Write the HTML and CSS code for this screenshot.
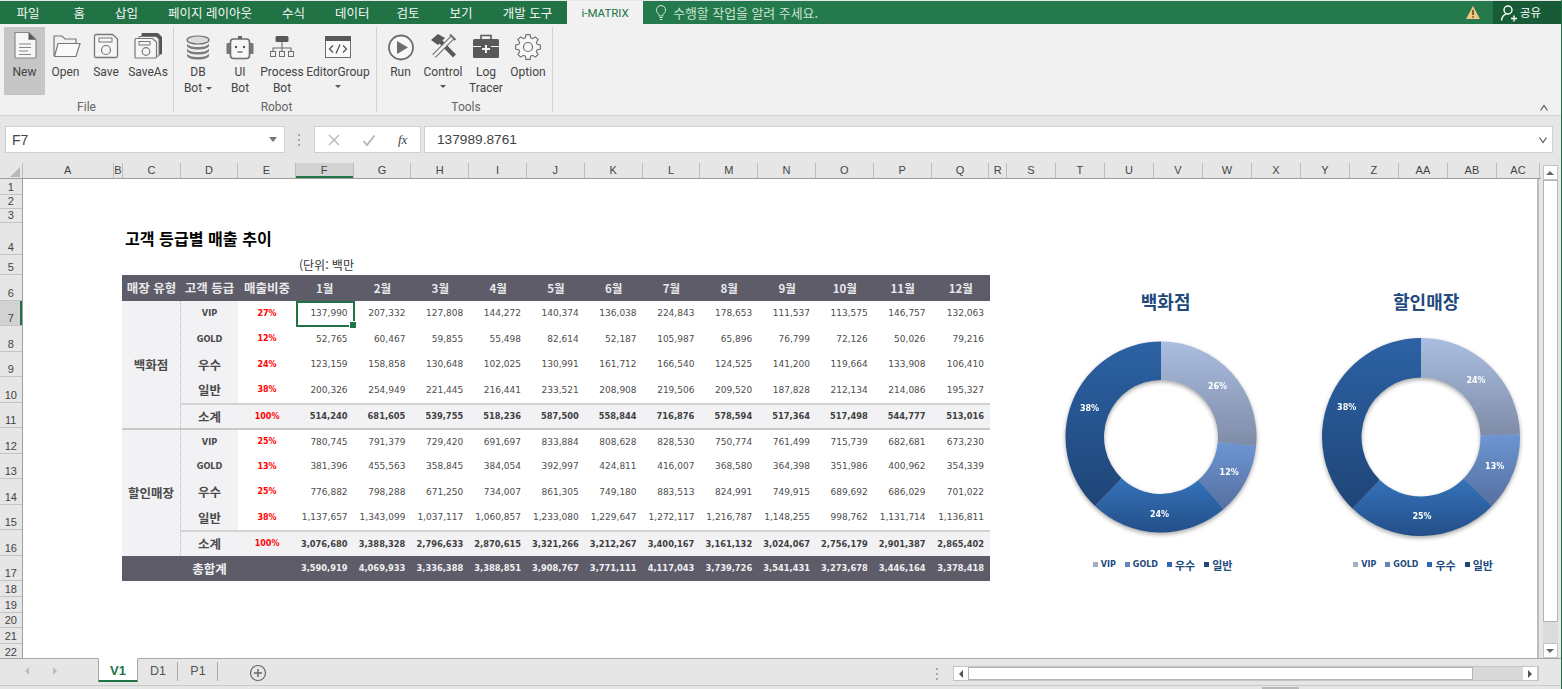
FILE: index.html
```html
<!DOCTYPE html>
<html lang="ko">
<head>
<meta charset="utf-8">
<title>고객 등급별 매출 추이</title>
<link rel="stylesheet" href="styles.css">
</head>
<body>
<div class="app">
  <nav class="tabs">
    <span class="tab first">파일</span><span class="tab">홈</span><span class="tab">삽입</span><span class="tab">페이지 레이아웃</span><span class="tab">수식</span><span class="tab tight">데이터</span><span class="tab">검토</span><span class="tab">보기</span><span class="tab last">개발 도구</span>
    <span class="tab-active">i-MATRIX</span>
    <div class="tell">
      <svg width="14" height="18" viewBox="0 0 14 18"><path d="M7 1.5a4.6 4.6 0 0 0-2.6 8.4c.6.5.8 1.1.8 2h3.6c0-.9.2-1.5.8-2A4.6 4.6 0 0 0 7 1.5ZM5.4 13.5h3.2M5.8 15.5h2.4" fill="none" stroke="#c9e2d3" stroke-width="1"/></svg>
      <span>수행할 작업을 알려 주세요.</span>
    </div>
    <svg class="warn" width="16" height="16" viewBox="0 0 16 16"><path d="M8 1.5 15 14.5H1Z" fill="#f2c67c"/><path d="M8 5.5v5M8 11.7v1.6" stroke="#5a4a2a" stroke-width="1.6"/></svg>
    <div class="share">
      <svg width="18" height="18" viewBox="0 0 18 18"><circle cx="8" cy="6" r="4" fill="none" stroke="#fff" stroke-width="1.4"/><path d="M1.5 16.5c.5-3.5 2.5-6 5-6.4M11 14.5h6M14 11.5v6" fill="none" stroke="#fff" stroke-width="1.4"/></svg>
      <span>공유</span>
    </div>
  </nav>

  <section class="ribbon">
    <div class="group g1">
      <div class="btns">
        <div class="btn w41 on">
          <svg width="32" height="32" viewBox="0 0 32 32"><path d="M6 2.5H20L27 9.5V27a1 1 0 0 1-1 1H7a1 1 0 0 1-1-1Z" fill="#f6f6f6" stroke="#8a8a8a" stroke-width="1.2"/><path d="M19.5 2.5 27 9.8H19.5Z" fill="#595959"/><path d="M10 14h12M10 17.5h12M10 21h9M10 24.5h12" stroke="#858585"/></svg>
          <span>New</span>
        </div>
        <div class="btn w41">
          <svg width="32" height="32" viewBox="0 0 32 32"><path d="M4 26V6h8l3 3h11v4.5" fill="none" stroke="#777" stroke-width="1.2"/><path d="M4.5 26.5 8 13.5H30L26 26.5Z" fill="#fafafa" stroke="#777" stroke-width="1.2"/></svg>
          <span>Open</span>
        </div>
        <div class="btn w40">
          <svg width="32" height="32" viewBox="0 0 32 32"><path d="M6 4.5H22.5L27.5 9V26A1.5 1.5 0 0 1 26 27.5H6A1.5 1.5 0 0 1 4.5 26V6A1.5 1.5 0 0 1 6 4.5Z" fill="#f6f6f6" stroke="#777" stroke-width="1.3"/><rect x="9" y="8" width="13" height="4" fill="none" stroke="#777"/><circle cx="16" cy="20" r="4.5" fill="none" stroke="#777" stroke-width="1.2"/></svg>
          <span>Save</span>
        </div>
        <div class="btn w44">
          <svg width="32" height="32" viewBox="0 0 32 32"><path d="M10 6V3.5H26L29.5 7V24H26" fill="#555" stroke="#555"/><path d="M7 9V6.500H24L27 9V26H24" fill="#f1f1f1" stroke="#777"/><path d="M4 8.500H20.500L24.500 12V27A1 1 0 0 1 23.500 28H4A1 1 0 0 1 3 27V9.500A1 1 0 0 1 4 8.500Z" fill="#f6f6f6" stroke="#777" stroke-width="1.2"/><rect x="7" y="11.500" width="11" height="3.500" fill="none" stroke="#777"/><circle cx="14" cy="21.500" r="3.800" fill="none" stroke="#777" stroke-width="1.2"/></svg>
          <span>SaveAs</span>
        </div>
      </div>
      <div class="glabel">File</div>
    </div>
    <div class="group g2">
      <div class="btns">
        <div class="btn w42">
          <svg width="32" height="32" viewBox="0 0 32 32"><ellipse cx="16" cy="10" rx="11" ry="4" fill="#dcdcdc" stroke="#6d6d6d" stroke-width="1.2"/><path d="M5 13c0 2.500 5 4 11 4s11-1.500 11-4v2.500c0 2.500-5 4-11 4s-11-1.500-11-4Z" fill="#7c7c7c"/><path d="M5 18c0 2.500 5 4 11 4s11-1.500 11-4v2.500c0 2.500-5 4-11 4s-11-1.500-11-4Z" fill="#7c7c7c"/><path d="M5 23c0 2.500 5 4 11 4s11-1.500 11-4v2.500c0 2.500-5 4-11 4s-11-1.500-11-4Z" fill="#7c7c7c"/></svg>
          <span>DB</span><span>Bot<i class="caret inline"></i></span>
        </div>
        <div class="btn w42">
          <svg width="32" height="32" viewBox="0 0 32 32"><rect x="14" y="6" width="4" height="3" fill="#666"/><rect x="2.500" y="13" width="4" height="11" rx="1" fill="#777"/><rect x="25.500" y="13" width="4" height="11" rx="1" fill="#777"/><rect x="6.500" y="9" width="19" height="19.500" rx="3" fill="#f6f6f6" stroke="#6d6d6d" stroke-width="1.600"/><circle cx="12" cy="17" r="1.200" fill="#555"/><circle cx="20" cy="17" r="1.200" fill="#555"/><path d="M13.500 22h5" stroke="#555" stroke-width="1.200"/></svg>
          <span>UI</span><span>Bot</span>
        </div>
        <div class="btn w42">
          <svg width="32" height="32" viewBox="0 0 32 32"><rect x="9.500" y="6" width="13" height="6" rx="1.500" fill="#595959"/><path d="M16 12v6M7 21.500V18H25V21.500M16 18v3.500" fill="none" stroke="#6d6d6d" stroke-width="1.100"/><rect x="4.500" y="21.500" width="5" height="5" fill="none" stroke="#6d6d6d"/><rect x="13.500" y="21.500" width="5" height="5" fill="none" stroke="#6d6d6d"/><rect x="22.500" y="21.500" width="5" height="5" fill="none" stroke="#6d6d6d"/></svg>
          <span>Process</span><span>Bot</span>
        </div>
        <div class="btn w70">
          <svg width="32" height="32" viewBox="0 0 32 32"><rect x="3.500" y="6.500" width="25" height="21" fill="#fafafa" stroke="#6d6d6d"/><rect x="3" y="6" width="26" height="5" fill="#595959"/><path d="M11 15.500 7.500 19 11 22.500M21 15.500 24.500 19 21 22.500M18 14.500 14 23.500" fill="none" stroke="#555" stroke-width="1.300"/></svg>
          <span>EditorGroup</span><i class="caret"></i>
        </div>
      </div>
      <div class="glabel">Robot</div>
    </div>
    <div class="group g3">
      <div class="btns">
        <div class="btn w41">
          <svg width="32" height="32" viewBox="0 0 32 32"><circle cx="16" cy="17.500" r="12" fill="#f8f8f8" stroke="#6d6d6d" stroke-width="1.800"/><path d="M12 11 23 17.500 12 24Z" fill="#6d6d6d"/></svg>
          <span>Run</span>
        </div>
        <div class="btn w44">
          <svg width="32" height="32" viewBox="0 0 32 32"><path d="M11 9 27.500 26" stroke="#595959" stroke-width="4.200"/><path d="M4 10 11 4 18 8 11 15Z" fill="#595959"/><path d="M26 7 7 26" stroke="#6d6d6d" stroke-width="5"/><path d="M26 7 7 26" stroke="#f1f1f1" stroke-width="2.800"/><path d="M23 4.500 28.500 10" stroke="#6d6d6d" stroke-width="2"/></svg>
          <span>Control</span><i class="caret"></i>
        </div>
        <div class="btn w42">
          <svg width="32" height="32" viewBox="0 0 32 32"><path d="M11 9.500V5.500H21V9.500" fill="none" stroke="#595959" stroke-width="1.600"/><rect x="3" y="9" width="26" height="19" rx="1.500" fill="#595959"/><path d="M3 16.500H11M21 16.500H29" stroke="#f1f1f1"/><path d="M16 15v8M12 19h8" stroke="#f1f1f1" stroke-width="2"/></svg>
          <span>Log</span><span>Tracer</span>
        </div>
        <div class="btn w42">
          <svg width="32" height="32" viewBox="0 0 32 32"><g transform="translate(16 17)"><polygon points="-2.620,-9.130 -1.960,-12.350 1.960,-12.350 2.620,-9.130 4.600,-8.310 7.350,-10.120 10.120,-7.350 8.310,-4.600 9.130,-2.620 12.350,-1.960 12.350,1.960 9.130,2.620 8.310,4.600 10.120,7.350 7.350,10.120 4.600,8.310 2.620,9.130 1.960,12.350 -1.960,12.350 -2.620,9.130 -4.600,8.310 -7.350,10.120 -10.120,7.350 -8.310,4.600 -9.130,2.620 -12.350,1.960 -12.350,-1.960 -9.130,-2.620 -8.310,-4.600 -10.120,-7.350 -7.350,-10.120 -4.600,-8.310" fill="#f8f8f8" stroke="#6d6d6d" stroke-width="1.100"/><circle r="4.500" fill="none" stroke="#6d6d6d" stroke-width="1.200"/></g></svg>
          <span>Option</span>
        </div>
      </div>
      <div class="glabel">Tools</div>
    </div>
    <svg class="collapse" width="10" height="8" viewBox="0 0 10 8"><path d="M1.500 6.500 5 1.500 8.500 6.500" fill="none" stroke="#555" stroke-width="1.200"/></svg>
  </section>

  <section class="fbar">
    <div class="namebox"><span>F7</span><i class="tri"></i></div>
    <div class="fdots"></div>
    <div class="fbtns">
      <svg width="14" height="14" viewBox="0 0 14 14"><path d="M2 2 12 12M12 2 2 12" stroke="#b5b5b5" stroke-width="1.400"/></svg>
      <svg width="14" height="14" viewBox="0 0 14 14"><path d="M1.500 8 5 12 12.500 2.500" fill="none" stroke="#b5b5b5" stroke-width="1.800"/></svg>
      <span class="fx">fx</span>
    </div>
    <div class="finput"><span>137989.8761</span><svg width="10" height="8" viewBox="0 0 10 8"><path d="M1.500 1.500 5 6.500 8.500 1.500" fill="none" stroke="#555" stroke-width="1.200"/></svg></div>
  </section>

  <section class="workspace">
    <div class="grid-area">
      <div class="colhead">
        <div class="corner"><i></i></div>
        <div>A</div><div>B</div><div>C</div><div>D</div><div>E</div><div class="sel">F</div><div>G</div><div>H</div><div>I</div><div>J</div><div>K</div><div>L</div><div>M</div><div>N</div><div>O</div><div>P</div><div>Q</div><div>R</div><div>S</div><div>T</div><div>U</div><div>V</div><div>W</div><div>X</div><div>Y</div><div>Z</div><div>AA</div><div>AB</div><div>AC</div>
      </div>
      <div class="sheet-body">
        <div class="rowhead">
          <div class="h16">1</div><div class="h14">2</div><div class="h14">3</div><div class="h32">4</div><div class="h20">5</div>
          <div class="h25">6</div><div class="h25 sel">7</div><div class="h25">8</div><div class="h25">9</div><div class="h25">10</div><div class="h25">11</div><div class="h25">12</div><div class="h25">13</div><div class="h25">14</div><div class="h25">15</div><div class="h25">16</div><div class="h25">17</div>
          <div class="h15">18</div><div class="h15">19</div><div class="h15">20</div><div class="h15">21</div><div class="h15">22</div>
        </div>
        <div class="sheet">
          <div class="report">
            <h1 class="title">고객 등급별 매출 추이</h1>
            <div class="unit">(단위: 백만</div>
            <div class="tbl">
              <div class="row head"><div>매장 유형</div><div>고객 등급</div><div>매출비중</div><div>1월</div><div>2월</div><div>3월</div><div>4월</div><div>5월</div><div>6월</div><div>7월</div><div>8월</div><div>9월</div><div>10월</div><div>11월</div><div>12월</div></div>
              <div class="row"><div class="store">백화점</div><div class="grade en">VIP</div><div class="pct">27%</div><div class="num active">137,990</div><div class="num">207,332</div><div class="num">127,808</div><div class="num">144,272</div><div class="num">140,374</div><div class="num">136,038</div><div class="num">224,843</div><div class="num">178,653</div><div class="num">111,537</div><div class="num">113,575</div><div class="num">146,757</div><div class="num">132,063</div></div>
              <div class="row"><div class="grade en">GOLD</div><div class="pct">12%</div><div class="num">52,765</div><div class="num">60,467</div><div class="num">59,855</div><div class="num">55,498</div><div class="num">82,614</div><div class="num">52,187</div><div class="num">105,987</div><div class="num">65,896</div><div class="num">76,799</div><div class="num">72,126</div><div class="num">50,026</div><div class="num">79,216</div></div>
              <div class="row"><div class="grade">우수</div><div class="pct">24%</div><div class="num">123,159</div><div class="num">158,858</div><div class="num">130,648</div><div class="num">102,025</div><div class="num">130,991</div><div class="num">161,712</div><div class="num">166,540</div><div class="num">124,525</div><div class="num">141,200</div><div class="num">119,664</div><div class="num">133,908</div><div class="num">106,410</div></div>
              <div class="row"><div class="grade">일반</div><div class="pct">38%</div><div class="num">200,326</div><div class="num">254,949</div><div class="num">221,445</div><div class="num">216,441</div><div class="num">233,521</div><div class="num">208,908</div><div class="num">219,506</div><div class="num">209,520</div><div class="num">187,828</div><div class="num">212,134</div><div class="num">214,086</div><div class="num">195,327</div></div>
              <div class="row sub"><div class="grade">소계</div><div class="pct">100%</div><div class="num">514,240</div><div class="num">681,605</div><div class="num">539,755</div><div class="num">518,236</div><div class="num">587,500</div><div class="num">558,844</div><div class="num">716,876</div><div class="num">578,594</div><div class="num">517,364</div><div class="num">517,498</div><div class="num">544,777</div><div class="num">513,016</div></div>
              <div class="row grp"><div class="store">할인매장</div><div class="grade en">VIP</div><div class="pct">25%</div><div class="num">780,745</div><div class="num">791,379</div><div class="num">729,420</div><div class="num">691,697</div><div class="num">833,884</div><div class="num">808,628</div><div class="num">828,530</div><div class="num">750,774</div><div class="num">761,499</div><div class="num">715,739</div><div class="num">682,681</div><div class="num">673,230</div></div>
              <div class="row"><div class="grade en">GOLD</div><div class="pct">13%</div><div class="num">381,396</div><div class="num">455,563</div><div class="num">358,845</div><div class="num">384,054</div><div class="num">392,997</div><div class="num">424,811</div><div class="num">416,007</div><div class="num">368,580</div><div class="num">364,398</div><div class="num">351,986</div><div class="num">400,962</div><div class="num">354,339</div></div>
              <div class="row"><div class="grade">우수</div><div class="pct">25%</div><div class="num">776,882</div><div class="num">798,288</div><div class="num">671,250</div><div class="num">734,007</div><div class="num">861,305</div><div class="num">749,180</div><div class="num">883,513</div><div class="num">824,991</div><div class="num">749,915</div><div class="num">689,692</div><div class="num">686,029</div><div class="num">701,022</div></div>
              <div class="row"><div class="grade">일반</div><div class="pct">38%</div><div class="num">1,137,657</div><div class="num">1,343,099</div><div class="num">1,037,117</div><div class="num">1,060,857</div><div class="num">1,233,080</div><div class="num">1,229,647</div><div class="num">1,272,117</div><div class="num">1,216,787</div><div class="num">1,148,255</div><div class="num">998,762</div><div class="num">1,131,714</div><div class="num">1,136,811</div></div>
              <div class="row sub"><div class="grade">소계</div><div class="pct">100%</div><div class="num">3,076,680</div><div class="num">3,388,328</div><div class="num">2,796,633</div><div class="num">2,870,615</div><div class="num">3,321,266</div><div class="num">3,212,267</div><div class="num">3,400,167</div><div class="num">3,161,132</div><div class="num">3,024,067</div><div class="num">2,756,179</div><div class="num">2,901,387</div><div class="num">2,865,402</div></div>
              <div class="row total"><div></div><div class="grade">총합계</div><div></div><div class="num">3,590,919</div><div class="num">4,069,933</div><div class="num">3,336,388</div><div class="num">3,388,851</div><div class="num">3,908,767</div><div class="num">3,771,111</div><div class="num">4,117,043</div><div class="num">3,739,726</div><div class="num">3,541,431</div><div class="num">3,273,678</div><div class="num">3,446,164</div><div class="num">3,378,418</div></div>
            </div>
          </div>
          <div class="charts">
            <svg class="defs" width="0" height="0">
              <defs>
                <linearGradient id="g1" x1="0" y1="0" x2="0" y2="1"><stop offset="0" stop-color="#abbde0"/><stop offset="1" stop-color="#7f8ca8"/></linearGradient>
                <linearGradient id="g2" x1="0" y1="0" x2="0" y2="1"><stop offset="0" stop-color="#6c95d3"/><stop offset="1" stop-color="#566f9f"/></linearGradient>
                <linearGradient id="g3" x1="0" y1="0" x2="0" y2="1"><stop offset="0" stop-color="#3573bb"/><stop offset="1" stop-color="#234f88"/></linearGradient>
                <linearGradient id="g4" x1="0" y1="0" x2="0" y2="1"><stop offset="0" stop-color="#2c62a4"/><stop offset="1" stop-color="#1f4577"/></linearGradient>
              </defs>
            </svg>
            <figure class="chart">
              <figcaption>백화점</figcaption>
              <svg class="donut d1" width="200" height="200" viewBox="0 0 200 200">
                <path fill="url(#g1)" d="M100 4.500A95.500 95.500 0 0 1 195.080 108.990L156.750 105.360A57 57 0 0 0 100 43Z"/>
                <path fill="url(#g2)" d="M195.080 108.990A95.500 95.500 0 0 1 162.660 172.070L137.400 143.020A57 57 0 0 0 156.750 105.360Z"/>
                <path fill="url(#g3)" d="M162.660 172.070A95.500 95.500 0 0 1 34.020 169.050L60.620 141.210A57 57 0 0 0 137.400 143.020Z"/>
                <path fill="url(#g4)" d="M34.020 169.050A95.500 95.500 0 0 1 100 4.500L100 43A57 57 0 0 0 60.620 141.210Z"/>
                <text x="156.500" y="49.500">26%</text><text x="168.200" y="135.800">12%</text><text x="98.500" y="177.800">24%</text><text x="28.500" y="71.800">38%</text>
              </svg>
              <div class="legend">
                <span><i class="s1"></i><b class="en">VIP</b></span><span><i class="s2"></i><b class="en">GOLD</b></span><span><i class="s3"></i><b>우수</b></span><span><i class="s4"></i><b>일반</b></span>
              </div>
            </figure>
            <figure class="chart">
              <figcaption>할인매장</figcaption>
              <svg class="donut d2" width="200" height="200" viewBox="0 0 200 200">
                <path fill="url(#g1)" d="M100 1A99 99 0 0 1 198.970 97.580L159.480 98.550A59.500 59.500 0 0 0 100 40.500Z"/>
                <path fill="url(#g2)" d="M198.970 97.580A99 99 0 0 1 170.970 169.020L142.660 141.480A59.500 59.500 0 0 0 159.480 98.550Z"/>
                <path fill="url(#g3)" d="M170.970 169.020A99 99 0 0 1 31.480 171.460L58.820 142.950A59.500 59.500 0 0 0 142.660 141.480Z"/>
                <path fill="url(#g4)" d="M31.480 171.460A99 99 0 0 1 100 1L100 40.500A59.500 59.500 0 0 0 58.820 142.950Z"/>
                <text x="155" y="43.300">24%</text><text x="173.700" y="129.600">13%</text><text x="101" y="179.300">25%</text><text x="25.700" y="70.600">38%</text>
              </svg>
              <div class="legend">
                <span><i class="s1"></i><b class="en">VIP</b></span><span><i class="s2"></i><b class="en">GOLD</b></span><span><i class="s3"></i><b>우수</b></span><span><i class="s4"></i><b>일반</b></span>
              </div>
            </figure>
          </div>
        </div>
      </div>
    </div>
    <div class="vscroll">
      <div class="sbtn"><i class="up"></i></div>
      <div class="vthumb"></div>
      <div class="vtrack"></div>
      <div class="sbtn"><i class="down"></i></div>
    </div>
  </section>

  <footer class="sheetbar">
    <div class="navs"><i class="nl"></i><i class="nr"></i></div>
    <div class="stab current">V1</div>
    <div class="stab">D1</div>
    <div class="stab">P1</div>
    <svg class="add" width="18" height="18" viewBox="0 0 18 18"><circle cx="9" cy="9" r="7.500" fill="none" stroke="#666" stroke-width="1.200"/><path d="M9 5v8M5 9h8" stroke="#666" stroke-width="1.400"/></svg>
    <div class="bardots"></div>
    <div class="hscroll">
      <div class="hbtn"><i class="nl dark"></i></div>
      <div class="hthumb"></div>
      <div class="htrack"></div>
      <div class="hbtn"><i class="nr dark"></i></div>
    </div>
  </footer>
  <div class="statusbar"><i></i></div>
</div>
</body>
</html>
```
FILE: styles.css
```css
* { box-sizing: border-box; }
html, body { margin: 0; padding: 0; }
body { width: 1562px; height: 689px; overflow: hidden; background: #e6e6e6; font-family: "Noto Sans CJK KR", "Open Sans", sans-serif; color: #444; }
.app { width: 1562px; height: 689px; display: flex; flex-direction: column; border-right: 1px solid #217346; padding-top: 1px; background: #e6e6e6; }

/* title tabs */
.tabs { height: 23px; flex: none; background: #217346; display: flex; align-items: center; font-size: 12.500px; color: #f2f7f4; line-height: 23px; white-space: nowrap; }
.tab { padding: 0 15px; }
.tab.first { padding: 0 19px 0 16.500px; }
.tab.tight { padding-right: 12px; }
.tab.last { padding-right: 15px; }
.tab-active { width: 76px; height: 24px; margin-top: 1px; background: #f1f1f1; color: #217346; text-align: center; font: 11.500px/24px "Roboto", sans-serif; }
.tell { flex: 1; height: 23px; display: flex; align-items: center; gap: 5px; padding-left: 11px; background: #247a4c; color: #c9e2d3; font-size: 12.900px; }
.warn { background: #247a4c; box-sizing: content-box; padding: 3.500px 12px 3.500px 0; }
.warn { margin-left: -28px; position: relative; }
.share { width: 68px; height: 23px; background: #185c37; display: flex; align-items: center; gap: 2px; padding-left: 7px; color: #fff; font-size: 11.500px; }

/* ribbon */
.ribbon { height: 92px; flex: none; background: #f1f1f1; border-bottom: 1px solid #d4d4d4; display: flex; padding: 3px 0 0 4px; position: relative; font: 12px/16px "Roboto", sans-serif; color: #444; }
.group { display: flex; flex-direction: column; width: 170px; height: 85px; border-right: 1px solid #d2d2d2; }
.g1 { padding-right: 4px; }
.g2 { width: 203px; padding-left: 3px; }
.g3 { width: 176px; padding-left: 3px; }
.btns { display: flex; height: 68px; }
.btn { height: 68px; flex: none; display: flex; flex-direction: column; align-items: center; padding-top: 3px; text-align: center; white-space: nowrap; }
.btn svg { flex: none; margin-bottom: 1.500px; }
.btn.on { background: #c6c6c6; }
.w40 { width: 40px; } .w41 { width: 41px; } .w42 { width: 42px; } .w44 { width: 44px; } .w70 { width: 70px; }
.glabel { height: 16px; margin-top: 4px; text-align: center; color: #666; }
.caret { display: block; width: 0; height: 0; margin-top: 5px; border: 3px solid transparent; border-top-color: #555; border-bottom-width: 0; }
.caret.inline { display: inline-block; margin: 0 0 2px 4px; }
.collapse { position: absolute; right: 12px; bottom: 3px; }

/* formula bar */
.fbar { height: 47px; flex: none; display: flex; align-items: flex-start; padding: 10px 0 0 5px; background: #e6e6e6; }
.namebox { width: 280px; height: 27px; background: #fff; border: 1px solid #cfcfcf; display: flex; align-items: center; justify-content: space-between; padding: 0 5px 0 6px; font: 14px "Liberation Sans", sans-serif; color: #444; }
.tri { width: 0; height: 0; border: 4px solid transparent; border-top: 5px solid #777; border-bottom-width: 0; margin-right: 2px; }
.fdots { width: 2px; height: 12px; margin: 8px 14px 0 13px; background: repeating-linear-gradient(#aaa 0 2px, transparent 2px 5px); }
.fbtns { width: 107px; height: 27px; background: #fff; border: 1px solid #cfcfcf; display: flex; align-items: center; padding-left: 12px; gap: 21px; }
.fx { font: italic 13px "Liberation Serif", serif; color: #444; margin-left: 1px; }
.finput { width: 1129px; height: 27px; margin-left: 3px; background: #fff; border: 1px solid #cfcfcf; display: flex; align-items: center; justify-content: space-between; padding: 0 4px 0 12px; font: 13.700px "Liberation Sans", sans-serif; color: #444; }

/* grid */
.workspace { height: 495px; flex: none; display: flex; }
.grid-area { width: 1541px; flex: none; }
.colhead { height: 16px; display: grid; grid-template-columns: 22.500px 91.100px 9.700px repeat(3, 57.500px) repeat(12, 57.800px) 17.600px repeat(10, 49px) 43px; font: 11px/15px "Liberation Sans", sans-serif; color: #444; border-bottom: 1px solid #9e9e9e; }
.colhead > div { text-align: center; border-right: 1px solid #bdbdbd; overflow: hidden; }
.colhead .sel { background: #d2d2d2; box-shadow: inset 0 -2px 0 #217346; }
.corner { position: relative; }
.corner i { display: block; width: 0; height: 0; margin: 4px 0 0 10px; border-style: solid; border-width: 0 0 10px 10px; border-color: transparent transparent #b9b9b9 transparent; }
.sheet-body { height: 479px; display: flex; overflow: hidden; }
.rowhead { width: 22.500px; flex: none; font: 11px/13px "Liberation Sans", sans-serif; color: #444; border-right: 1px solid #9e9e9e; }
.rowhead > div { display: flex; align-items: flex-end; justify-content: center; border-bottom: 1px solid #c4c4c4; }
.rowhead .sel { background: #d2d2d2; box-shadow: inset -2px 0 0 #217346; }
.h16 { height: 16px; } .h14 { height: 14px; } .h32 { height: 32px; } .h20 { height: 20px; } .h25 { height: 25.500px; } .h15 { height: 15.800px; }
.sheet { width: 1516px; flex: none; background: #fff; display: flex; padding-left: 99.500px; border-right: 2px solid #bcbcbc; }

.report { width: 868px; flex: none; padding-top: 44px; }
.title { margin: 0; height: 32px; font-size: 16.100px; line-height: 30px; font-weight: 700; color: #000; padding-left: 3px; white-space: nowrap; }
.unit { height: 20px; padding-left: 177px; font-size: 12px; line-height: 19px; color: #333; white-space: nowrap; }
.tbl { display: grid; grid-template-columns: 58.800px 57.500px 57.500px repeat(11, 57.800px) 58.400px; grid-auto-rows: 25.500px; position: relative; }
.row { display: contents; }
.tbl .row > div { display: flex; align-items: center; justify-content: center; white-space: nowrap; }
.head > div { background: #5d5c68; color: #e9e9ec; font-size: 12.500px; font-weight: 700; }
.tbl .head > div:nth-child(n+4) { font-size: 11.500px; }
.tbl .store { grid-row: span 5; background: #f2f2f5; border-right: 1px dotted #a9bcc4; font-size: 12.500px; font-weight: 700; color: #4a4a4a; }
.grade { background: #f2f2f5; font-size: 12.500px; font-weight: 700; color: #4a4a4a; }
.grade.en { font: 700 8.200px "DejaVu Sans", sans-serif; }
.pct { font: 700 8px "DejaVu Sans", sans-serif; color: #ff0000; }
.tbl .row > .num { justify-content: flex-end; padding-right: 6px; font: 9px "DejaVu Sans", sans-serif; color: #4d4d4d; }
.tbl .sub > div { background: #f2f2f5; border-top: 2px solid #d3d3d3; }
.tbl .sub > .num { font: 700 8.300px "DejaVu Sans", sans-serif; color: #404040; }
.tbl .grp > div { border-top: 2px solid #c8c8c8; }
.tbl .total > div { background: #5d5c68; color: #f0f0f2; }
.tbl .total > .num { font: 700 8.300px "DejaVu Sans", sans-serif; color: #f0f0f2; }
.tbl .total > .grade { font-size: 12.500px; }
.tbl .row > .active { position: relative; }
.active::before { content: ""; position: absolute; inset: 0 -1px -1px 0; border: 2px solid #217346; }
.active::after { content: ""; position: absolute; right: -3px; bottom: -3px; width: 6px; height: 6px; background: #217346; border: 1px solid #fff; }

/* charts */
.charts { display: flex; margin-left: 45.400px; }
.defs { position: absolute; }
.chart { width: 260.500px; margin: 0; padding-top: 111px; display: flex; flex-direction: column; align-items: center; }
.chart figcaption { height: 24px; font-size: 18px; line-height: 22px; font-weight: 700; color: #234a7c; }
.donut { flex: none; margin: 22.500px 10px 0 0; overflow: visible; filter: drop-shadow(0 2px 2px rgba(0,0,0,.35)); }
.donut text { font: 700 8px "DejaVu Sans", sans-serif; fill: #fff; text-anchor: middle; dominant-baseline: central; }
.legend { display: flex; gap: 9px; height: 16px; margin: 20px 6px 0 0; align-items: center; color: #234a7c; font-size: 11px; }
.legend span { display: flex; align-items: center; gap: 3px; }
.legend i { width: 5px; height: 5px; display: block; }
.legend b { font-weight: 700; }
.legend .en { font: 700 8px "DejaVu Sans", sans-serif; }
.s1 { background: #a0aec8; } .s2 { background: #6285bd; } .s3 { background: #2e68ae; } .s4 { background: #1f4679; }

/* vertical scrollbar */
.vscroll { width: 15px; margin-left: 1.500px; padding-top: 2px; display: flex; flex-direction: column; }
.sbtn { height: 15px; flex: none; background: #fff; border: 1px solid #c4c4c4; display: flex; align-items: center; justify-content: center; }
.up { border: 4px solid transparent; border-bottom: 4px solid #666; border-top-width: 0; }
.down { border: 4px solid transparent; border-top: 4px solid #666; border-bottom-width: 0; }
.vthumb { height: 442px; flex: none; background: #fff; border: 1px solid #b4b4b4; }
.vtrack { flex: 1; background: #dcdcdc; }

/* sheet tabs */
.sheetbar { height: 28px; flex: none; display: flex; align-items: flex-start; border-bottom: 1px solid #c9c9c9; border-top: 1px solid #a8a8a8; font: 700 12px/22px "Liberation Sans", sans-serif; color: #555; background: #e6e6e6; }
.navs { width: 98px; flex: none; display: flex; align-items: center; gap: 24px; padding: 8px 0 0 25px; }
.nl { display: block; border: 4px solid transparent; border-right: 4px solid #bdbdbd; border-left-width: 0; }
.nr { display: block; border: 4px solid transparent; border-left: 4px solid #bdbdbd; border-right-width: 0; }
.nl.dark { border-right-color: #555; }
.nr.dark { border-left-color: #555; }
.stab { width: 40px; height: 19px; margin-top: 3px; line-height: 19px; text-align: center; padding-left: 1px; border-right: 1px solid #a8a8a8; font-weight: 400; font-size: 12.500px; }
.stab.current { height: 24px; margin-top: -1px; padding-left: 0; line-height: 24px; background: #fff; border: 1px solid #a8a8a8; border-top-color: #fff; border-bottom: 2px solid #217346; color: #217346; font-weight: 700; font-size: 13px; }
.add { margin: 5px 0 0 31px; flex: none; }
.bardots { width: 2px; height: 12px; margin: 9px 0 0 669px; flex: none; background: repeating-linear-gradient(#aaa 0 2px, transparent 2px 5px); }
.hscroll { width: 586px; height: 15px; margin: 7px 0 0 15px; flex: none; display: flex; background: #d9d9d9; border: 1px solid #c4c4c4; }
.hbtn { width: 15px; flex: none; background: #fff; border-right: 1px solid #c4c4c4; display: flex; align-items: center; justify-content: center; }
.hthumb { width: 505px; flex: none; background: #fff; border: 1px solid #b4b4b4; margin-left: -1px; }
.htrack { flex: 1; }
.statusbar { flex: 1; position: relative; }
.statusbar i { display: block; width: 37px; height: 2px; margin: 1px 0 0 1262px; background: #b9b9b9; }
```
